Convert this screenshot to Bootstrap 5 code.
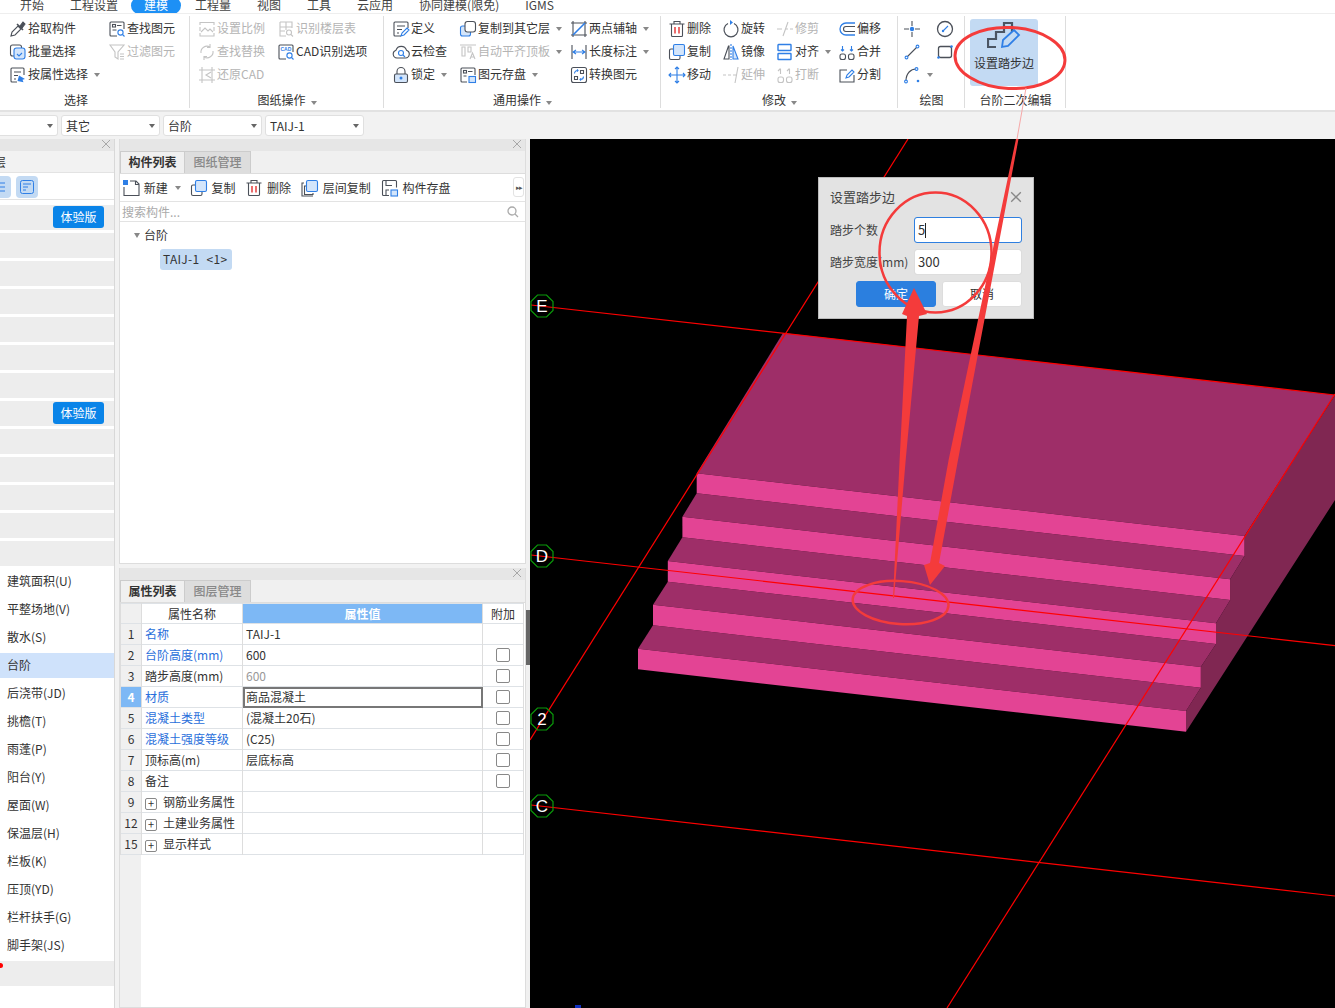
<!DOCTYPE html>
<html lang="zh-CN">
<head>
<meta charset="UTF-8">
<title>设置踏步边</title>
<link href="https://cdn.jsdelivr.net/npm/bootstrap@5.3.0/dist/css/bootstrap.min.css" rel="stylesheet">
<style>
    body { width: 1335px; height: 1008px; overflow: hidden; position: relative; background: #f2f2f2; font: 12px/1.2 "Noto Sans CJK SC", "Noto Sans", sans-serif; color: #333; --acc: #2f7fe6; }
    /* menu tabs, cut off by the top of the picture */
    .menu-bar { height: 14px; overflow: hidden; background: #fff; border-bottom: 1px solid #eee; padding-left: 7px; }
    .menu-tab { padding: 0 13px; height: 22px; line-height: 15px; margin-top: -3px; color: #444; border-radius: 11px; }
    .menu-tab.on { background: #1d90f5; color: #fff; margin-right: 1px; padding-top: 0; height: 17px; }
    /* ribbon */
    .ribbon { height: 98px; background: #fff; border-bottom: 2px solid #e2e2e2; }
    .rb-group { height: 92px; margin-top: 2px; margin-right: 1px; border-right: 1px solid #ddd; position: relative; padding-top: 1px; }
    .rb-grid { display: grid; grid-auto-flow: column; grid-template-rows: repeat(3, 23px); }
    .g-sel { width: 190px; padding-left: 9px; } .g-sel .rb-grid { grid-template-columns: 99px auto; }
    .g-sel .rb-label { right: 37px; }
    .g-cad { width: 193px; padding-left: 7px; } .g-cad .rb-grid { grid-template-columns: 79px auto; }
    .g-gen { width: 276px; padding-left: 7px; } .g-gen .rb-grid { grid-template-columns: 67px 111px auto; }
    .g-mod { width: 236px; padding-left: 6px; } .g-mod .rb-grid { grid-template-columns: 54px 54px 62px auto; }
    .g-drw { width: 66px; padding-left: 4px; } .g-drw .rb-grid { grid-template-columns: 33px 18px; }
    .g-stp { width: 100px; padding-left: 4px; }
    .rb-item { display: flex; align-items: center; gap: 1px; white-space: nowrap; }
    .rb-item.off { color: #b4b4b4; --acc: #c4c4c4; }
    .ic { width: 18px; height: 18px; flex: none; fill: none; stroke: currentColor; stroke-width: 1.1; color: #4b5059; }
    .off .ic { color: #c4c4c4; }
    .ac { stroke: var(--acc); }
    .acf { stroke: var(--acc); fill: #d3e5fb; }
    .acd { fill: var(--acc); stroke: none; }
    .red { stroke: #e02020; }
    .tri { display: inline-block; border: 3px solid transparent; border-top: 4px solid #888; border-bottom: 0; margin-left: 5px; }
    .rb-label { position: absolute; left: 0; right: 0; bottom: 1px; text-align: center; line-height: 14px; }
    .stp-btn { width: 68px; height: 67px; background: #c3daf3; border-radius: 3px; margin-top: 2px; padding-top: 2px; text-align: center; }
    .stp-ico { display: block; width: 34px; height: 28px; margin: 0 auto 7px; fill: none; }
    /* selector row */
    .sel-row { height: 27px; padding-top: 3px; gap: 3px; background: #f2f2f2; }
    .sel-box { height: 21px; background: #fff; border: 1px solid #e0e0e0; border-radius: 3px; padding: 0 4px; line-height: 19px; width: 99px; }
    .sel-box.cut { width: 58px; border-left: 0; border-radius: 0 3px 3px 0; }
    .sel-box .tri { margin-left: auto; margin-top: 8px; border-top-color: #666; }
    /* main */
    .work { height: 869px; }
    .side { width: 115px; background: #fff; border-right: 1px solid #d8d8d8; flex: none; overflow: hidden; }
    .pane-top { height: 12px; background: #e6e6e6; position: relative; }
    .pane-x { position: absolute; right: 3px; top: 0; width: 10px; height: 10px; stroke: #a8a8a8; stroke-width: 1; }
    .side-cap { height: 21px; background: #f2f2f2; line-height: 21px; margin-left: -18px; }
    .side-btns { height: 28px; border-bottom: 1px solid #e3e3e3; border-top: 1px solid #e3e3e3; margin-bottom: 5px; position: relative; }
    .side-tog { position: absolute; top: 3px; width: 22px; height: 22px; border-radius: 4px; background: #c3daf3; padding: 3px; }
    .side-tog svg { display: block; width: 16px; height: 16px; fill: none; stroke: #2f7fe6; }
    .tog-a { left: -11px; }
    .tog-b { left: 16px; }
    .side-row { height: 25px; margin-bottom: 3px; background: #ededed; padding-left: 7px; line-height: 24px; position: relative; white-space: nowrap; }
    .side-row.plain { background: #fff; }
    .side-row.on { background: #cfe2fb; }
    .try-tag { position: absolute; left: 53px; top: 1px; width: 51px; height: 22px; line-height: 22px; padding: 0; font-size: 12px; font-weight: 400; text-align: center; background: #0a84e8; border-radius: 3px; color: #fff; }
    .red-dot { position: absolute; left: -2px; top: 2px; width: 5px; height: 5px; border-radius: 50%; background: #f00; }
    .mid { width: 407px; margin-left: 4px; flex: none; gap: 4px; }
    .pane { background: #fff; border: 1px solid #ddd; border-top: 0; }
    .pane-upper { height: 425px; }
    .pane-tabs { height: 23px; background: #f0f0f0; border-bottom: 1px solid #ddd; }
    .pane-tab { width: 65px; line-height: 20px; text-align: center; background: #f0f0f0; border: 1px solid #ccc; border-bottom: 0; font-weight: 700; color: #333; height: 22px; }
    .pane-tab.dim { background: #ddd; color: #888; font-weight: 500; width: 66px; border-left: 0; }
    .list-bar { height: 28px; padding: 1px 0 0 2px; border-bottom: 1px solid #e3e3e3; position: relative; align-items: center; }
    .list-bar .rb-item { margin-right: 10px; }
    .list-bar .rb-item:first-child { margin-right: 13px; }
    .list-bar .tri { margin-left: 6px; margin-right: -4px; }
    .more-btn { position: absolute; right: 1px; top: 3px; width: 11px; height: 20px; border: 1px solid #e3e3e3; border-radius: 3px; font-size: 7px; line-height: 18px; text-align: center; color: #555; letter-spacing: -1px; }
    .find-bar { height: 20px; border-bottom: 1px solid #e3e3e3; color: #aaa; padding-left: 2px; line-height: 20px; position: relative; }
    .find-bar svg { position: absolute; right: 6px; top: 4px; width: 12px; height: 12px; fill: none; stroke: #aaa; stroke-width: 1.3; }
    .tree-root { padding: 5px 0 0 14px; height: 27px; line-height: 15px; }
    .tree-root .tri { margin: 0 4px 2px 0; border-width: 3px; border-top-width: 5px; border-bottom-width: 0; vertical-align: middle; }
    .tree-chip { margin-left: 40px; width: 72px; height: 21px; line-height: 20px; background: #c3daf3; border-radius: 3px; padding-left: 3px; word-spacing: 4px; letter-spacing: .3px; }
    .pane-lower { flex: 1; position: relative; background: linear-gradient(to right, #f0f0f0 21px, #fff 21px); }
    .pane-lower .pane-tab { height: 22px; }
    .attr-table { table-layout: fixed; width: 403px; margin: 0; --bs-table-bg: transparent; font-size: 12px; color: #333; }
    .attr-table th, .attr-table td { height: 21px; padding: 0 3px; line-height: 20px; border-color: #ddd; font-weight: 400; white-space: nowrap; background: #fff; }
    .attr-table tr:first-child td { height: 20px; line-height: 19px; }
    .attr-table .num { background: #f0f0f0; text-align: center; padding: 0; }
    .attr-table .num.on { background: #7db8f5; color: #fff; font-weight: 700; }
    .attr-table .cen { text-align: center; }
    .attr-table .hot { background: #7db8f5; color: #fff; font-weight: 700; }
    .attr-table .blu { color: #2a6fdb; }
    .attr-table .gry { color: #999; }
    .attr-table .cur { outline: 2px solid #777; outline-offset: -2px; }
    .attr-table .form-check-input { width: 14px; height: 14px; margin: 3px 0 0 10px; border: 1px solid #888; border-radius: 2px; float: none; display: block; }
    .plus-box { display: inline-block; width: 12px; height: 12px; border: 1px solid #888; border-radius: 2px; line-height: 9px; text-align: center; margin: 0 6px 0 0; vertical-align: -1px; font-size: 11px; }
    .split { width: 4px; flex: none; background: #f0f0f0; position: relative; }
    .split-grip { position: absolute; left: 0; top: 471px; width: 4px; height: 55px; background: #666; }
    .canvas { flex: 1; background: #000; position: relative; overflow: hidden; }
    .canvas-art { position: absolute; left: 0; top: 0; width: 805px; height: 869px; }
    .ax-ring { fill: none; stroke: #0a9a0a; stroke-width: 1.2; }
    .ax-txt { fill: #fff; font: 17px "Liberation Sans", sans-serif; text-anchor: middle; }
    /* dialog */
    .stp-dlg { position: absolute; left: 288px; top: 38px; width: 216px; height: 142px; background: #e3e3e3; border: 1px solid #bbb; padding: 10px 11px 0 11px; color: #444; }
    .dlg-title { font-size: 13px; height: 29px; line-height: 18px; position: relative; }
    .dlg-x { position: absolute; right: 0; top: 3px; width: 12px; height: 12px; stroke: #888; stroke-width: 1.1; }
    .dlg-row { height: 32px; display: flex; align-items: flex-start; }
    .dlg-row span { width: 84px; line-height: 26px; white-space: nowrap; flex: none; }
    .dlg-in { width: 108px; height: 26px; min-height: 0; padding: 0 3px; line-height: 24px; font-size: 13px; border-radius: 3px; color: #333; border: 1px solid #ddd; }
    .dlg-in.hot { border-color: #2e7fe0; }
    .dlg-caret { display: inline-block; width: 1px; height: 15px; background: #222; vertical-align: -3px; }
    .dlg-btns { justify-content: flex-end; gap: 6px; }
    .dlg-btn { width: 80px; height: 26px; padding: 0; font-size: 12px; line-height: 24px; border-radius: 3px; }
    .dlg-btn.go { background: #2b7fdf; border-color: #2b7fdf; color: #fff; }
    .dlg-btn.no { background: #fff; border-color: #ddd; color: #333; }
    .marks { position: absolute; left: 0; top: 0; width: 1335px; height: 1008px; pointer-events: none; fill: none; stroke: #f43b3b; }
    .marks polygon { fill: #f43b3b; stroke: none; }
</style>
</head>
<body>
<svg width="0" height="0" class="position-absolute">
    <symbol id="i-pick" viewBox="0 0 18 18"><path d="M2 16l1-4 6-6 3 3-6 6z"/><path d="M8 4l6 6" stroke-width="1.6"/><path d="M11 6l3-4 2 2-3 4z" fill="currentColor"/></symbol>
    <symbol id="i-find" viewBox="0 0 18 18"><path d="M9 16H3a1 1 0 0 1-1-1V3a1 1 0 0 1 1-1h12a1 1 0 0 1 1 1v6"/><rect x="4.5" y="4.5" width="3" height="2.5"/><path d="M9 5.5h4.5M4.5 10h4"/><circle class="ac" cx="12.5" cy="12.5" r="2.6"/><path class="ac" d="M14.5 14.5l2 2"/></symbol>
    <symbol id="i-batch" viewBox="0 0 18 18"><rect x="1.5" y="2" width="11" height="11" rx="2"/><rect class="acf" x="5" y="5" width="11" height="11" rx="2.5"/><path class="ac" d="M8 11l2 2 3-3"/></symbol>
    <symbol id="i-attr" viewBox="0 0 18 18"><path d="M8 16H3a1 1 0 0 1-1-1V3a1 1 0 0 1 1-1h11a1 1 0 0 1 1 1v6"/><path d="M5 6h7M5 9.500h4M5 13h2"/><path class="acd" d="M10 9.500l6 3.500-2.500.8 1 2.500-6-1.300z"/></symbol>
    <symbol id="i-filter" viewBox="0 0 18 18"><path d="M2 2h14l-6 7v7l-3-2V9z"/><path d="M12 11h4M12 13.500h4M12 16h4"/></symbol>
    <symbol id="i-scale" viewBox="0 0 18 18"><path d="M2 5V2.500h14V5M2 13v3h14v-3M2 7v4M16 7v4"/><path d="M3 12l4-4 3 3 2-2 3 3"/></symbol>
    <symbol id="i-floor" viewBox="0 0 18 18"><path d="M3 2h12v6M3 2v14h6M3 7h12M3 11h5M9 2v8"/><circle cx="12" cy="12.500" r="2.500"/><path d="M14 14.500l2 2"/></symbol>
    <symbol id="i-swap" viewBox="0 0 18 18"><path d="M3 10a6 6 0 0 1 9-6M15 8a6 6 0 0 1-9 6"/><path d="M12 1v3.500H9M6 17v-3.500h3"/></symbol>
    <symbol id="i-cad" viewBox="0 0 18 18"><path d="M9 16H3a1 1 0 0 1-1-1V3a1 1 0 0 1 1-1h12a1 1 0 0 1 1 1v6"/><text class="acd" x="3.500" y="8" font-size="5" font-family="Liberation Sans" font-weight="700">CAD</text><circle class="ac" cx="12.500" cy="12.500" r="2.600"/><path class="ac" d="M14.500 14.500l2 2"/></symbol>
    <symbol id="i-restore" viewBox="0 0 18 18"><path d="M4 1v16M14 1v16M1 4h16M1 14h16"/><path d="M13 6L8 9l5 3"/></symbol>
    <symbol id="i-def" viewBox="0 0 18 18"><path d="M9 16H3a1 1 0 0 1-1-1V3a1 1 0 0 1 1-1h12a1 1 0 0 1 1 1v5"/><path d="M5 6h8M5 9.500h5M5 13h2"/><path class="ac" d="M9 16l1-3 5-5 2 2-5 5z"/></symbol>
    <symbol id="i-cloud" viewBox="0 0 18 18"><path d="M5 15a4 4 0 0 1-1-7.800 5.500 5.500 0 0 1 10.500 0A4 4 0 0 1 13.500 15z"/><circle class="ac" cx="9" cy="10" r="2.500"/><path class="ac" d="M11 12l2 2"/></symbol>
    <symbol id="i-lock" viewBox="0 0 18 18"><path d="M5 8V5.500a4 4 0 0 1 8 0V8"/><rect x="2.500" y="8" width="13" height="8.500" rx="1.500" fill="#d3e5fb"/><circle class="acd" cx="9" cy="12" r="1.500"/></symbol>
    <symbol id="i-copy" viewBox="0 0 18 18"><rect class="acf" x="1.500" y="6" width="10" height="10" rx="2"/><rect x="6" y="1.500" width="10.500" height="10.500" rx="2.500" fill="#fff"/></symbol>
    <symbol id="i-dup" viewBox="0 0 18 18"><path d="M5.500 6H3a1.500 1.500 0 0 0-1.500 1.500V15A1.500 1.500 0 0 0 3 16.500h7.500A1.500 1.500 0 0 0 12 15v-2.500"/><rect class="acf" x="5.500" y="1.500" width="11" height="11" rx="1.500"/></symbol>
    <symbol id="i-flush" viewBox="0 0 18 18"><path d="M1 2h16M3 4v9h3V4zM9 4v5h3V4z"/><path d="M11 16l2.500-6 2.500 6M12 14h3"/></symbol>
    <symbol id="i-save" viewBox="0 0 18 18"><path d="M8 16H3a1 1 0 0 1-1-1V3a1 1 0 0 1 1-1h12a1 1 0 0 1 1 1v6"/><rect x="4.500" y="4.500" width="3" height="2.500"/><path d="M9 5.500h4.500M4.500 10h3"/><rect class="acf" x="10" y="10.500" width="6.500" height="6"/></symbol>
    <symbol id="i-axis" viewBox="0 0 18 18"><path d="M1 3h16M1 15h16M3 1v16M15 1v16"/><path class="ac" d="M3 15L15 3" stroke-width="1.600"/></symbol>
    <symbol id="i-dim" viewBox="0 0 18 18"><path d="M2 2v14M16 2v14"/><path class="ac" d="M3 9h12M6 7l-3 2 3 2M12 7l3 2-3 2"/></symbol>
    <symbol id="i-conv" viewBox="0 0 18 18"><rect x="1.500" y="1.500" width="15" height="15" rx="2"/><path d="M4.500 10.500h3v3h-3zM10.500 4.500h3v3h-3z"/><path class="ac" d="M4.500 7.500a3 3 0 0 1 3-3M7 3.500l1 1-1 1M13.500 10.500a3 3 0 0 1-3 3M11 14.500l-1-1 1-1"/></symbol>
    <symbol id="i-del" viewBox="0 0 18 18"><path d="M1.500 4h15M6 4V1.500h6V4M3.500 4v11.500a1 1 0 0 0 1 1h9a1 1 0 0 0 1-1V4"/><path class="red" d="M7 7v6.500M11 7v6.500" stroke-width="1.300"/></symbol>
    <symbol id="i-rot" viewBox="0 0 18 18"><path d="M6 3.500a7 7 0 1 0 6 0" stroke-width="1.200"/><path class="acd" d="M8 0v5l3-2.500z"/></symbol>
    <symbol id="i-trim" viewBox="0 0 18 18"><path d="M1 9h5M10 9h2M14 9h3M12 2L7 16"/></symbol>
    <symbol id="i-mirror" viewBox="0 0 18 18"><path d="M6.500 3L2 16h5V3z"/><path class="acf" d="M11 3l5 13h-5z"/><path class="ac" d="M9 1v16" stroke-dasharray="2 1"/></symbol>
    <symbol id="i-offset" viewBox="0 0 18 18"><path class="ac" d="M17 3H8a6 6 0 0 0 0 12h9" stroke-width="1.300"/><path d="M17 6.500H8a2.500 2.500 0 0 0 0 5h9"/></symbol>
    <symbol id="i-align" viewBox="0 0 18 18"><rect class="ac" x="2" y="1.500" width="13" height="6" rx=".5" stroke-width="1.400"/><rect class="ac" x="2" y="10.500" width="13" height="6" rx=".5" stroke-width="1.400"/></symbol>
    <symbol id="i-merge" viewBox="0 0 18 18"><rect x="2" y="11" width="5.500" height="5.500" rx="2"/><rect x="10.500" y="11" width="5.500" height="5.500" rx="2"/><path class="ac" d="M4.500 3v5M3 6.500l1.500 1.500L6 6.500M13.500 3v5M12 6.500l1.500 1.500L15 6.500"/></symbol>
    <symbol id="i-move" viewBox="0 0 18 18"><path class="ac" d="M9 1v16M1 9h16M7 3l2-2 2 2M7 15l2 2 2-2M3 7L1 9l2 2M15 7l2 2-2 2"/></symbol>
    <symbol id="i-ext" viewBox="0 0 18 18"><path d="M1 9h3M6 9h3M11 9h3M16 1L13 17"/></symbol>
    <symbol id="i-break" viewBox="0 0 18 18"><rect x="2" y="11" width="5.500" height="5.500" rx="2"/><rect x="10.500" y="11" width="5.500" height="5.500" rx="2"/><path d="M4.500 8V3M13.500 8V3M2 5l2.500-2.500M11 5l2.500-2.500"/></symbol>
    <symbol id="i-split" viewBox="0 0 18 18"><path d="M9 4H2v12h14V9"/><path class="ac" d="M8 12l1-3 5-5 2 2-5 5z"/></symbol>
    <symbol id="i-pt" viewBox="0 0 18 18"><path d="M1 9h5M12 9h5M9 1v5M9 12v5"/><circle class="acd" cx="9" cy="9" r="2.200"/></symbol>
    <symbol id="i-arcp" viewBox="0 0 18 18"><circle cx="9" cy="9" r="7.500" stroke-width="1.300"/><path class="ac" d="M7 11l5-5"/><circle class="acd" cx="7" cy="11" r="1.200"/></symbol>
    <symbol id="i-line" viewBox="0 0 18 18"><path d="M4 14L14 4"/><circle class="ac" cx="3.500" cy="14.500" r="1.400" fill="#fff"/><circle class="ac" cx="14.500" cy="3.500" r="1.400" fill="#fff"/></symbol>
    <symbol id="i-rect" viewBox="0 0 18 18"><rect x="2.500" y="3.500" width="13" height="11" rx="2" stroke-width="1.300"/><circle class="acd" cx="2.500" cy="14.500" r="1.300"/><circle class="acd" cx="15.500" cy="3.500" r="1.300"/></symbol>
    <symbol id="i-arc" viewBox="0 0 18 18"><path d="M3 15C3 7 8 3 13 3"/><circle class="ac" cx="3" cy="15.500" r="1.400" fill="#fff"/><circle class="ac" cx="13.500" cy="3" r="1.400" fill="#fff"/><circle class="acd" cx="15" cy="15" r="1.300"/></symbol>
    <symbol id="i-new" viewBox="0 0 18 18"><path d="M8 2h6l3 3v11.500H2V8"/><path d="M13.500 2v3.500H17"/><path class="acd" d="M1 1h5v5H1z"/></symbol>
    <symbol id="i-lcopy" viewBox="0 0 18 18"><path d="M5 7H3.500v8.500H12V14M3 4H1v13h11"/><rect class="acf" x="5.500" y="1.500" width="11" height="11" rx="1.500"/></symbol>
    <symbol id="i-store" viewBox="0 0 18 18"><path d="M8 16.500H2.500a1 1 0 0 1-1-1v-13a1 1 0 0 1 1-1h12a1 1 0 0 1 1 1v6"/><path d="M5 1.500v5h6M5 16V11h3"/><rect class="acf" x="10" y="11" width="6.500" height="6"/></symbol>
    <symbol id="i-x" viewBox="0 0 10 10"><path d="M1 1l8 8M9 1L1 9"/></symbol>
</svg>

<div class="menu-bar d-flex">
    <div class="menu-tab">开始</div><div class="menu-tab">工程设置</div><div class="menu-tab on">建模</div><div class="menu-tab">工程量</div><div class="menu-tab">视图</div><div class="menu-tab">工具</div><div class="menu-tab">云应用</div><div class="menu-tab">协同建模(限免)</div><div class="menu-tab">IGMS</div>
</div>

<div class="ribbon d-flex">
    <div class="rb-group g-sel">
        <div class="rb-grid">
            <div class="rb-item"><svg class="ic"><use href="#i-pick"/></svg>拾取构件</div>
            <div class="rb-item"><svg class="ic"><use href="#i-batch"/></svg>批量选择</div>
            <div class="rb-item"><svg class="ic"><use href="#i-attr"/></svg>按属性选择<i class="tri"></i></div>
            <div class="rb-item"><svg class="ic"><use href="#i-find"/></svg>查找图元</div>
            <div class="rb-item off"><svg class="ic"><use href="#i-filter"/></svg>过滤图元</div>
        </div>
        <div class="rb-label">选择</div>
    </div>
    <div class="rb-group g-cad">
        <div class="rb-grid">
            <div class="rb-item off"><svg class="ic"><use href="#i-scale"/></svg>设置比例</div>
            <div class="rb-item off"><svg class="ic"><use href="#i-swap"/></svg>查找替换</div>
            <div class="rb-item off"><svg class="ic"><use href="#i-restore"/></svg>还原CAD</div>
            <div class="rb-item off"><svg class="ic"><use href="#i-floor"/></svg>识别楼层表</div>
            <div class="rb-item"><svg class="ic"><use href="#i-cad"/></svg>CAD识别选项</div>
        </div>
        <div class="rb-label">图纸操作<i class="tri"></i></div>
    </div>
    <div class="rb-group g-gen">
        <div class="rb-grid">
            <div class="rb-item"><svg class="ic"><use href="#i-def"/></svg>定义</div>
            <div class="rb-item"><svg class="ic"><use href="#i-cloud"/></svg>云检查</div>
            <div class="rb-item"><svg class="ic"><use href="#i-lock"/></svg>锁定<i class="tri"></i></div>
            <div class="rb-item"><svg class="ic"><use href="#i-copy"/></svg>复制到其它层<i class="tri"></i></div>
            <div class="rb-item off"><svg class="ic"><use href="#i-flush"/></svg>自动平齐顶板<i class="tri"></i></div>
            <div class="rb-item"><svg class="ic"><use href="#i-save"/></svg>图元存盘<i class="tri"></i></div>
            <div class="rb-item"><svg class="ic"><use href="#i-axis"/></svg>两点辅轴<i class="tri"></i></div>
            <div class="rb-item"><svg class="ic"><use href="#i-dim"/></svg>长度标注<i class="tri"></i></div>
            <div class="rb-item"><svg class="ic"><use href="#i-conv"/></svg>转换图元</div>
        </div>
        <div class="rb-label">通用操作<i class="tri"></i></div>
    </div>
    <div class="rb-group g-mod">
        <div class="rb-grid">
            <div class="rb-item"><svg class="ic"><use href="#i-del"/></svg>删除</div>
            <div class="rb-item"><svg class="ic"><use href="#i-dup"/></svg>复制</div>
            <div class="rb-item"><svg class="ic"><use href="#i-move"/></svg>移动</div>
            <div class="rb-item"><svg class="ic"><use href="#i-rot"/></svg>旋转</div>
            <div class="rb-item"><svg class="ic"><use href="#i-mirror"/></svg>镜像</div>
            <div class="rb-item off"><svg class="ic"><use href="#i-ext"/></svg>延伸</div>
            <div class="rb-item off"><svg class="ic"><use href="#i-trim"/></svg>修剪</div>
            <div class="rb-item"><svg class="ic"><use href="#i-align"/></svg>对齐<i class="tri"></i></div>
            <div class="rb-item off"><svg class="ic"><use href="#i-break"/></svg>打断</div>
            <div class="rb-item"><svg class="ic"><use href="#i-offset"/></svg>偏移</div>
            <div class="rb-item"><svg class="ic"><use href="#i-merge"/></svg>合并</div>
            <div class="rb-item"><svg class="ic"><use href="#i-split"/></svg>分割</div>
        </div>
        <div class="rb-label">修改<i class="tri"></i></div>
    </div>
    <div class="rb-group g-drw">
        <div class="rb-grid">
            <div class="rb-item"><svg class="ic"><use href="#i-pt"/></svg></div>
            <div class="rb-item"><svg class="ic"><use href="#i-line"/></svg></div>
            <div class="rb-item"><svg class="ic"><use href="#i-arc"/></svg><i class="tri"></i></div>
            <div class="rb-item"><svg class="ic"><use href="#i-arcp"/></svg></div>
            <div class="rb-item"><svg class="ic"><use href="#i-rect"/></svg></div>
        </div>
        <div class="rb-label">绘图</div>
    </div>
    <div class="rb-group g-stp">
        <div class="stp-btn">
            <svg class="stp-ico" viewBox="0 0 34 28">
                <path d="M9 26H1v-8h8v-7h8V2h8v9" stroke="#4b5563" stroke-width="2.200"/>
                <path d="M15 26l1-7L27 9l5 5-11 11z" fill="#c3daf3" stroke="#2f7fe6" stroke-width="1.800"/>
            </svg>
            设置踏步边
        </div>
        <div class="rb-label">台阶二次编辑</div>
    </div>
</div>

<div class="sel-row d-flex">
    <div class="sel-box cut d-flex"><i class="tri"></i></div>
    <div class="sel-box d-flex">其它<i class="tri"></i></div>
    <div class="sel-box d-flex">台阶<i class="tri"></i></div>
    <div class="sel-box d-flex">TAIJ-1<i class="tri"></i></div>
</div>

<div class="work d-flex">
    <div class="side">
        <div class="pane-top"><svg class="pane-x"><use href="#i-x"/></svg></div>
        <div class="side-cap">楼层</div>
        <div class="side-btns">
            <div class="side-tog tog-a"><svg viewBox="0 0 16 16"><path d="M3 4h10M3 8h10M3 12h10"/></svg></div>
            <div class="side-tog tog-b"><svg viewBox="0 0 16 16"><rect x="1.500" y="1.500" width="13" height="13" rx="2"/><path d="M4 5h8M4 8h5M4 11h3"/></svg></div>
        </div>
        <div class="side-row"><span class="badge try-tag">体验版</span></div>
        <div class="side-row"></div>
        <div class="side-row"></div>
        <div class="side-row"></div>
        <div class="side-row"></div>
        <div class="side-row"></div>
        <div class="side-row"></div>
        <div class="side-row"><span class="badge try-tag">体验版</span></div>
        <div class="side-row"></div>
        <div class="side-row"></div>
        <div class="side-row"></div>
        <div class="side-row"></div>
        <div class="side-row"></div>
        <div class="side-row plain">建筑面积(U)</div>
        <div class="side-row plain">平整场地(V)</div>
        <div class="side-row plain">散水(S)</div>
        <div class="side-row plain on">台阶</div>
        <div class="side-row plain">后浇带(JD)</div>
        <div class="side-row plain">挑檐(T)</div>
        <div class="side-row plain">雨蓬(P)</div>
        <div class="side-row plain">阳台(Y)</div>
        <div class="side-row plain">屋面(W)</div>
        <div class="side-row plain">保温层(H)</div>
        <div class="side-row plain">栏板(K)</div>
        <div class="side-row plain">压顶(YD)</div>
        <div class="side-row plain">栏杆扶手(G)</div>
        <div class="side-row plain">脚手架(JS)</div>
        <div class="side-row"><i class="red-dot"></i></div>
    </div>

    <div class="mid d-flex flex-column">
        <div class="pane pane-upper">
            <div class="pane-top"><svg class="pane-x"><use href="#i-x"/></svg></div>
            <div class="pane-tabs d-flex">
                <div class="pane-tab">构件列表</div>
                <div class="pane-tab dim">图纸管理</div>
            </div>
            <div class="list-bar d-flex">
                <div class="rb-item"><svg class="ic"><use href="#i-new"/></svg>&nbsp;新建<i class="tri"></i></div>
                <div class="rb-item"><svg class="ic"><use href="#i-dup"/></svg>&nbsp;复制</div>
                <div class="rb-item"><svg class="ic"><use href="#i-del"/></svg>&nbsp;删除</div>
                <div class="rb-item"><svg class="ic"><use href="#i-lcopy"/></svg>&nbsp;层间复制</div>
                <div class="rb-item"><svg class="ic"><use href="#i-store"/></svg>&nbsp;构件存盘</div>
                <div class="more-btn">▸▸</div>
            </div>
            <div class="find-bar">搜索构件...
                <svg viewBox="0 0 12 12"><circle cx="5" cy="5" r="4"/><path d="M8 8l3 3"/></svg>
            </div>
            <div class="tree-root"><i class="tri"></i>台阶</div>
            <div class="tree-chip">TAIJ-1 &lt;1&gt;</div>
        </div>
        <div class="pane pane-lower">
            <div class="pane-top"><svg class="pane-x"><use href="#i-x"/></svg></div>
            <div class="pane-tabs d-flex">
                <div class="pane-tab">属性列表</div>
                <div class="pane-tab dim">图层管理</div>
            </div>
            <table class="table table-bordered attr-table">
                <colgroup><col width="21"><col width="101"><col width="240"><col width="41"></colgroup>
                <tbody>
                    <tr><td class="num"></td><td class="cen">属性名称</td><td class="cen hot">属性值</td><td class="cen">附加</td></tr>
                    <tr><td class="num">1</td><td class="blu">名称</td><td>TAIJ-1</td><td></td></tr>
                    <tr><td class="num">2</td><td class="blu">台阶高度(mm)</td><td>600</td><td><input class="form-check-input" type="checkbox"></td></tr>
                    <tr><td class="num">3</td><td>踏步高度(mm)</td><td class="gry">600</td><td><input class="form-check-input" type="checkbox"></td></tr>
                    <tr><td class="num on">4</td><td class="blu">材质</td><td class="cur">商品混凝土</td><td><input class="form-check-input" type="checkbox"></td></tr>
                    <tr><td class="num">5</td><td class="blu">混凝土类型</td><td>(混凝土20石)</td><td><input class="form-check-input" type="checkbox"></td></tr>
                    <tr><td class="num">6</td><td class="blu">混凝土强度等级</td><td>(C25)</td><td><input class="form-check-input" type="checkbox"></td></tr>
                    <tr><td class="num">7</td><td>顶标高(m)</td><td>层底标高</td><td><input class="form-check-input" type="checkbox"></td></tr>
                    <tr><td class="num">8</td><td>备注</td><td></td><td><input class="form-check-input" type="checkbox"></td></tr>
                    <tr><td class="num">9</td><td><span class="plus-box">+</span>钢筋业务属性</td><td></td><td></td></tr>
                    <tr><td class="num">12</td><td><span class="plus-box">+</span>土建业务属性</td><td></td><td></td></tr>
                    <tr><td class="num">15</td><td><span class="plus-box">+</span>显示样式</td><td></td><td></td></tr>
                </tbody>
            </table>
        </div>
    </div>

    <div class="split"><div class="split-grip"></div></div>

    <div class="canvas">
        <!-- viewBox uses page coordinates, canvas starts at 530,139 -->
        <svg class="canvas-art" viewBox="530 139 805 869">
            <polygon fill="#9e2e68" points="783,333 1335,395 1244.500,536 696.700,473.300"/>
            <polygon fill="#802752" points="1335,395 1335,500 1186,731.700 1186,711 1200.800,687.700 1200.800,667 1216,644 1216,623.300 1230.200,600 1230.200,579.300 1244.500,556 1244.500,536"/>
            <polygon fill="#9e2e68" points="696.700,493.300 1244.500,556 1230.200,579.300 682.400,516.700"/>
            <polygon fill="#9e2e68" points="682.400,537.300 1230.200,600 1216,623.300 667.800,561"/>
            <polygon fill="#9e2e68" points="667.800,581.700 1216,644 1200.800,667 653,604.700"/>
            <polygon fill="#9e2e68" points="653,625.300 1200.800,687.700 1186,711 638,648.700"/>
            <polygon fill="#e34494" points="696.700,473.300 1244.500,536 1244.500,556 696.700,493.300"/>
            <polygon fill="#e34494" points="682.400,516.700 1230.200,579.300 1230.200,600 682.400,537.300"/>
            <polygon fill="#e34494" points="667.800,561 1216,623.300 1216,644 667.800,581.700"/>
            <polygon fill="#e34494" points="653,604.700 1200.800,667 1200.800,687.700 653,625.300"/>
            <polygon fill="#e34494" points="638,648.700 1186,711 1186,731.700 638,669.300"/>
            <g stroke="#f00" stroke-width="1.200">
                <line x1="908" y1="139" x2="530" y2="740"/>
                <line x1="1335" y1="394" x2="947" y2="1008"/>
                <line x1="531" y1="305" x2="1335" y2="395"/>
                <line x1="531" y1="555" x2="1335" y2="645.600"/>
                <line x1="531" y1="805" x2="1335" y2="896"/>
            </g>
            <g>
                <polygon class="ax-ring" points="537.500,295 546.500,295 553,301.500 553,310.500 546.500,317 537.500,317 531,310.500 531,301.500"/>
                <text class="ax-txt" x="542" y="312">E</text>
                <polygon class="ax-ring" points="537.500,545 546.500,545 553,551.500 553,560.500 546.500,567 537.500,567 531,560.500 531,551.500"/>
                <text class="ax-txt" x="542" y="562">D</text>
                <polygon class="ax-ring" points="537.500,708 546.500,708 553,714.500 553,723.500 546.500,730 537.500,730 531,723.500 531,714.500"/>
                <text class="ax-txt" x="542" y="725">2</text>
                <polygon class="ax-ring" points="537.500,795 546.500,795 553,801.500 553,810.500 546.500,817 537.500,817 531,810.500 531,801.500"/>
                <text class="ax-txt" x="542" y="812">C</text>
            </g>
            <rect x="575" y="1005" width="6" height="3" fill="#1030c0"/>
        </svg>

        <div class="stp-dlg">
            <div class="dlg-title">设置踏步边<svg class="dlg-x"><use href="#i-x"/></svg></div>
            <div class="dlg-row"><span>踏步个数</span><div class="form-control dlg-in hot">5<i class="dlg-caret"></i></div></div>
            <div class="dlg-row"><span>踏步宽度(mm)</span><div class="form-control dlg-in">300</div></div>
            <div class="d-flex dlg-btns">
                <button class="btn dlg-btn go" type="button">确定</button>
                <button class="btn dlg-btn no" type="button">取消</button>
            </div>
        </div>
    </div>
</div>

<!-- hand drawn red marks over the whole screenshot -->
<svg class="marks" viewBox="0 0 1335 1008">
    <ellipse cx="1010" cy="58" rx="55" ry="30.500" stroke-width="3" transform="rotate(3 1010 58)"/>
    <ellipse cx="935.500" cy="252.500" rx="56" ry="60" stroke-width="2.500"/>
    <ellipse cx="900.600" cy="602.500" rx="48" ry="21.500" stroke-width="2.400" transform="rotate(4 900 602)"/>
    <line x1="1026" y1="88" x2="1017" y2="139" stroke="#f7a8a8" stroke-width="1"/>
    <polygon points="1016,139 948.600,460 930,563 924,565 930,585 945,566 939,563 958,460 1018.500,139"/>
    <polygon points="893,598 899.600,460 907,316 902,314 914,288 927,314 919,316 905.700,460 894,598"/>
</svg>

<script src="https://cdn.jsdelivr.net/npm/bootstrap@5.3.0/dist/js/bootstrap.bundle.min.js"></script>
</body>
</html>
